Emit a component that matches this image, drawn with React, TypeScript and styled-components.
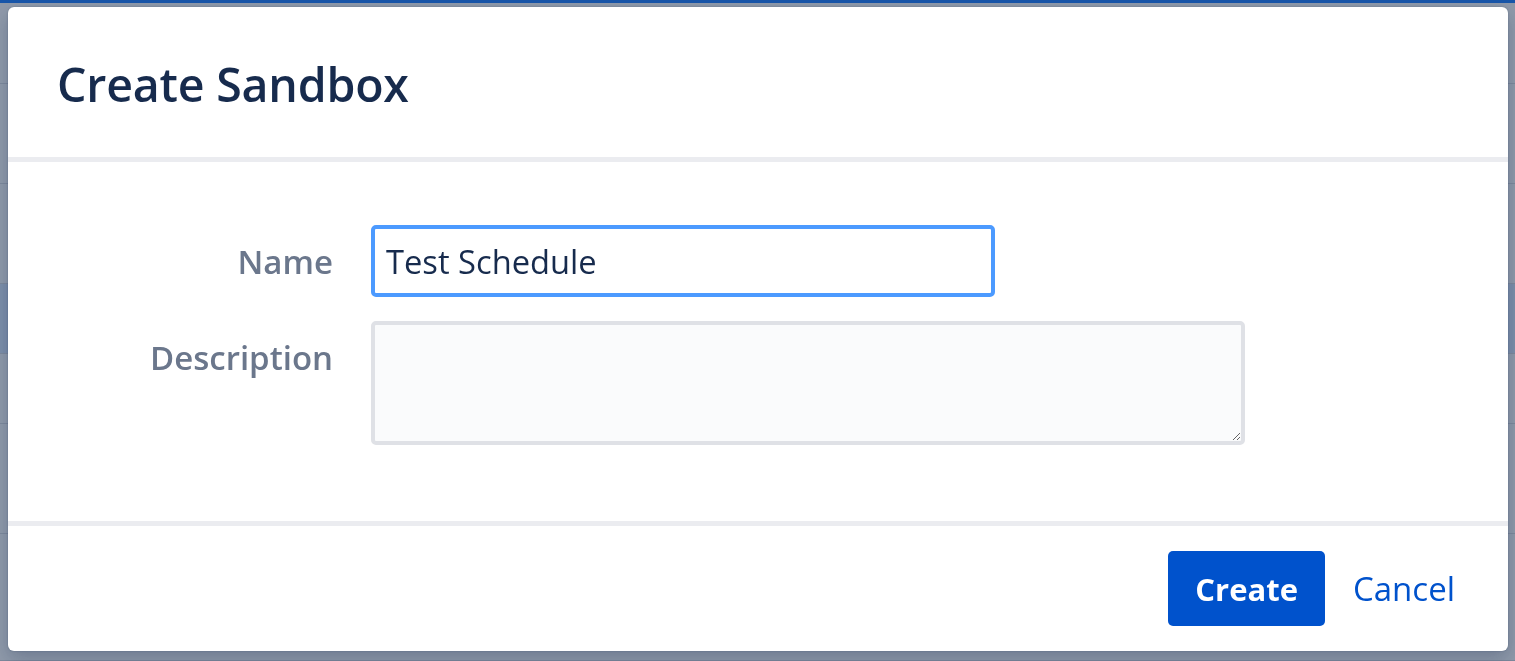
import React from "react";
import styled, { createGlobalStyle } from "styled-components";

const FONT = `"Open Sans", "Noto Sans", "Liberation Sans", sans-serif`;

const Global = createGlobalStyle`
  html, body { margin: 0; padding: 0; }
  body {
    width: 1515px;
    height: 661px;
    overflow: hidden;
    background: #ffffff;
    font-family: ${FONT};
  }
`;

/* ---------- page behind the dialog ---------- */
const Page = styled.div`
  width: 1515px;
  height: 661px;
  display: flex;
  flex-direction: column;
  background: #ffffff;
`;

const PageBar = styled.div`
  height: 84px;
  border-top: 3px solid #2684ff;
  border-bottom: 1px solid #dfe1e6;
  box-sizing: border-box;
`;

const PageRow = styled.div<{ $h: number; $shade?: boolean }>`
  height: ${(p) => p.$h}px;
  border-bottom: 1px solid #dfe1e6;
  background: ${(p) => (p.$shade ? "#deebff" : "#ffffff")};
  box-sizing: border-box;
  display: flex;
  align-items: center;
  padding-left: 380px;
  font-size: 32px;
  color: #172b4d;
`;

const Blanket = styled.div`
  position: fixed;
  inset: 0;
  background: rgba(9, 30, 66, 0.45);
`;

/* ---------- dialog ---------- */
const Dialog = styled.div`
  position: fixed;
  left: 8px;
  top: 7px;
  width: 1500px;
  height: 644px;
  background: #ffffff;
  border-radius: 6px;
  box-shadow: 0 0 2px rgba(9, 30, 66, 0.3), 0 8px 20px rgba(9, 30, 66, 0.25);
  display: flex;
  flex-direction: column;
  overflow: hidden;
`;

const Header = styled.header`
  height: 155px;
  box-sizing: border-box;
  padding: 0 0 0 49px;
  display: flex;
  align-items: center;
  border-bottom: 5px solid #ebecf0;
`;

const Title = styled.h1`
  margin: 0;
  font-family: ${FONT};
  font-size: 46.5px;
  font-weight: 600;
  color: #172b4d;
  letter-spacing: -0.2px;
  padding-top: 3px;
`;

const Body = styled.div`
  flex: 1;
  box-sizing: border-box;
  padding: 63px 0 0 0;
  display: grid;
  grid-template-columns: 325px 1fr;
  column-gap: 38px;
  row-gap: 24px;
  align-content: start;
  border-bottom: 5px solid #ebecf0;
`;

const Label = styled.label`
  text-align: right;
  font-family: ${FONT};
  font-size: 33px;
  font-weight: 600;
  color: #6b778c;
  line-height: 74px;
  height: 72px;
`;

const TextInput = styled.input`
  width: 624px;
  height: 72px;
  box-sizing: border-box;
  border: 4px solid #4c9aff;
  border-radius: 5px;
  padding: 0 11px;
  font-family: ${FONT};
  font-size: 32.7px;
  color: #172b4d;
  background: #ffffff;
  outline: none;
`;

const TextArea = styled.textarea`
  display: block;
  width: 874px;
  height: 124px;
  box-sizing: border-box;
  border: 4px solid #dfe1e6;
  border-radius: 5px;
  background: #fafbfc;
  padding: 8px 12px;
  font-family: ${FONT};
  font-size: 33px;
  color: #172b4d;
  outline: none;
`;

const Footer = styled.footer`
  height: 125px;
  box-sizing: border-box;
  padding: 0 29px 0 0;
  display: flex;
  align-items: center;
  justify-content: flex-end;
  gap: 4px;
`;

const Button = styled.button<{ $primary?: boolean }>`
  height: 75px;
  box-sizing: border-box;
  border: none;
  border-radius: 5px;
  padding: 0 ${(p) => (p.$primary ? 27 : 24)}px;
  font-family: ${FONT};
  font-size: ${(p) => (p.$primary ? 31 : 33)}px;
  font-weight: ${(p) => (p.$primary ? 700 : 400)};
  color: ${(p) => (p.$primary ? "#ffffff" : "#0052cc")};
  background: ${(p) => (p.$primary ? "#0052cc" : "transparent")};
  cursor: pointer;
`;

export default function App() {
  return (
    <>
      <Global />
      <Page>
        <PageBar />
        <PageRow $h={100} />
        <PageRow $h={100}>a</PageRow>
        <PageRow $h={70} $shade />
        <PageRow $h={70} />
        <PageRow $h={110} />
        <PageRow $h={127}>Team A</PageRow>
      </Page>
      <Blanket />
      <Dialog role="dialog" aria-labelledby="dlg-title">
        <Header>
          <Title id="dlg-title">Create Sandbox</Title>
        </Header>
        <Body>
          <Label htmlFor="sb-name">Name</Label>
          <div>
            <TextInput id="sb-name" defaultValue="Test Schedule" />
          </div>
          <Label htmlFor="sb-desc">Description</Label>
          <div>
            <TextArea id="sb-desc" />
          </div>
        </Body>
        <Footer>
          <Button $primary>Create</Button>
          <Button>Cancel</Button>
        </Footer>
      </Dialog>
    </>
  );
}
